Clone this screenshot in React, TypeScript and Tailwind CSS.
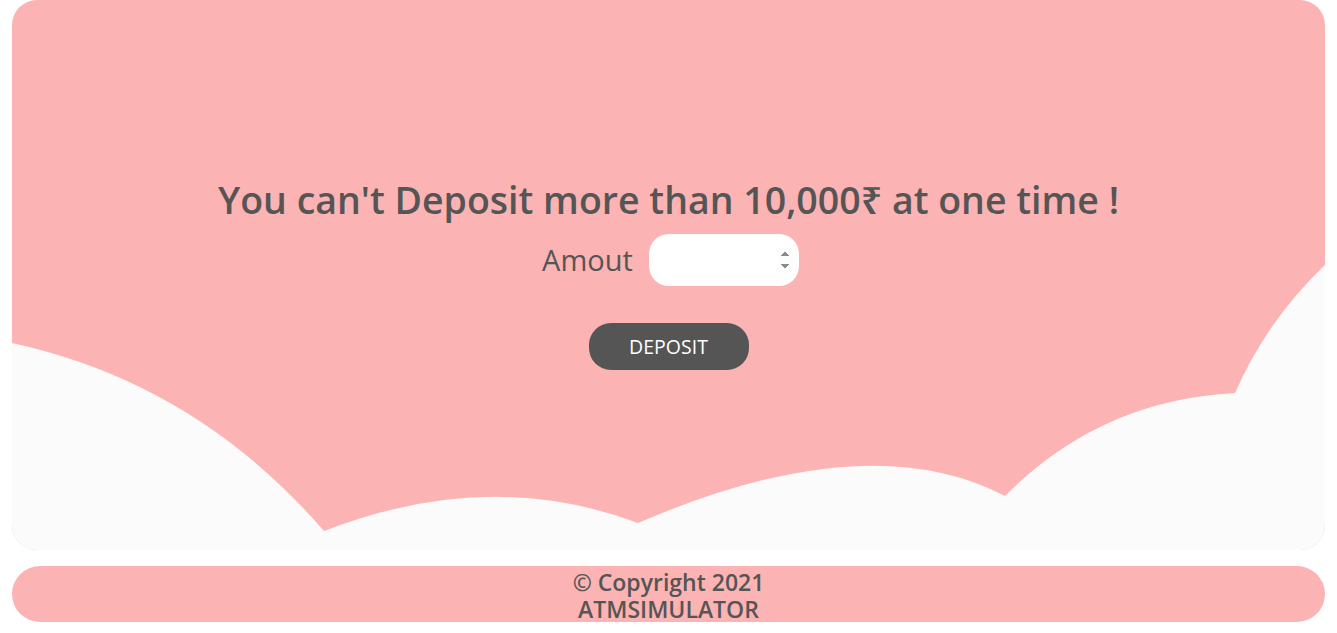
// ATM simulator: deposit screen with cloud background and footer.
import { useState } from "react";

const font = { fontFamily: '"Open Sans", "Noto Sans", sans-serif' };

function Clouds() {
  return (
    <svg
      className="absolute inset-0 w-full h-full"
      viewBox="0 0 1313 550"
      preserveAspectRatio="none"
      aria-hidden
    >
      <path
        d="M0,343 Q184,383 312,531 Q477,467 626,523 Q856,424 993,496 Q1088,400 1223,393 Q1255,320 1313,265 L1313,550 L0,550 Z"
        fill="#fbfbfb"
      />
    </svg>
  );
}

export default function App() {
  const [amount, setAmount] = useState("");

  return (
    <div className="min-h-screen bg-white px-3" style={font}>
      <main className="relative h-[550px] rounded-[25px] overflow-hidden bg-[#fcb3b3]">
        <Clouds />
        <div className="relative flex flex-col items-center pt-[173px] text-[#555]">
          <h1 className="text-[37.5px] font-semibold leading-[54px]">
            You can't Deposit more than 10,000₹ at one time !
          </h1>
          <div className="flex items-center gap-4 mt-[7px] ml-[4px]">
            <label htmlFor="amt" className="text-[29px] font-normal">Amout</label>
            <input
              id="amt"
              type="number"
              autoFocus
              value={amount}
              onChange={(e) => setAmount(e.target.value)}
              className="w-[150px] h-[52px] bg-white rounded-[20px] pl-[3px] pr-[6px] text-lg outline-none"
            />
          </div>
          <button
            type="button"
            className="mt-[37px] w-[160px] h-[47px] rounded-[22px] bg-[#555] text-white text-[19.5px]"
          >
            DEPOSIT
          </button>
        </div>
      </main>
      <footer className="mt-4 h-[56px] rounded-[28px] bg-[#fcb3b3] flex flex-col items-center justify-center pt-[3px] text-[#555] text-[23px] font-semibold leading-[27px]">
        <p>© Copyright 2021</p>
        <p>ATMSIMULATOR</p>
      </footer>
    </div>
  );
}
